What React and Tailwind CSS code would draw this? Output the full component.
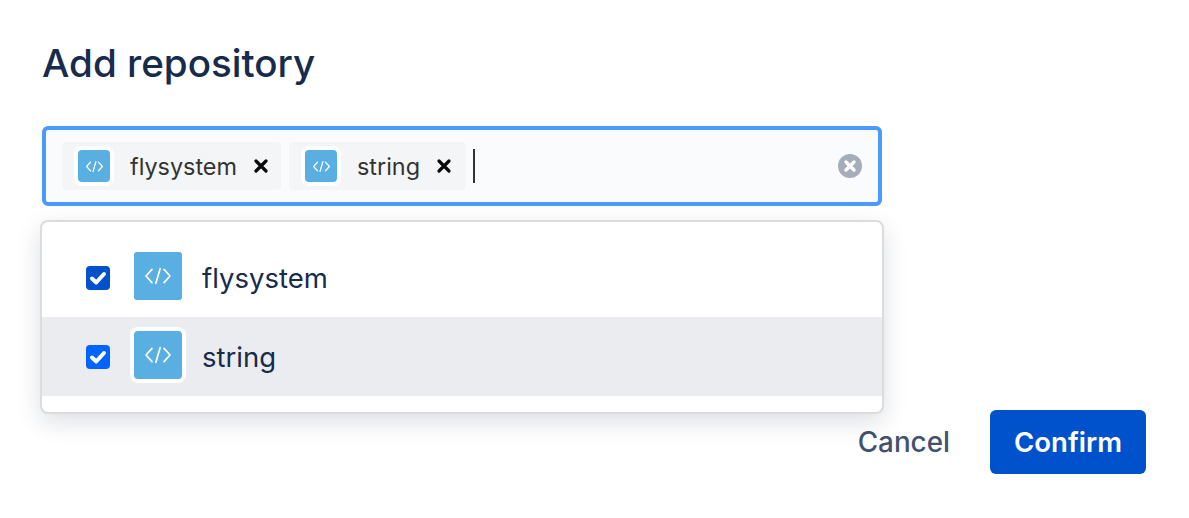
const CodeIcon = ({ size, ring }) => (
  <span className={`flex items-center justify-center bg-[#59afe1] rounded-[3px] ${size === 'lg' ? 'w-12 h-12' : 'w-8 h-8'} ${ring}`}>
    <svg viewBox="0 0 24 24" className={size === 'lg' ? 'w-8 h-8' : 'w-[21px] h-[21px]'} fill="none" stroke="white" strokeWidth={size === 'lg' ? 1.25 : 1.5} strokeLinecap="round" strokeLinejoin="round">
      <path d="M7.5 7 3 12l4.5 5" />
      <path d="M16.5 7 21 12l-4.5 5" />
      <path d="M13.6 6.5 10.4 17.5" />
    </svg>
  </span>
);

const Chip = ({ label, className }) => (
  <div className={`flex items-center h-12 bg-[#f4f5f7] rounded-[4px] pl-4 ${className}`}>
    <CodeIcon size="sm" ring="ring-[4px] ring-white rounded-[4px]" />
    <span className="ml-[20px] pt-0.5 text-[23.4px] text-[#333] leading-none">{label}</span>
    <svg viewBox="0 0 16 16" className="ml-4 w-4 h-4" fill="none" stroke="#0a0a0a" strokeWidth="3.2" strokeLinecap="round">
      <path d="M3 3l10 10M13 3 3 13" />
    </svg>
  </div>
);

const Check = ({ color }) => (
  <span className={`flex items-center justify-center w-6 h-6 rounded-[4px] ${color}`}>
    <svg viewBox="0 0 24 24" className="w-6 h-6" fill="none" stroke="white" strokeWidth="4" strokeLinecap="round" strokeLinejoin="round">
      <path d="M6 12.5 10.2 16.5 18 8" />
    </svg>
  </span>
);

export default function App() {
  return (
    <div className="w-[1189px] h-[518px] bg-white pl-[42px] pr-[43px] pt-[37px] font-['Inter',sans-serif] overflow-hidden">
      <h1 className="text-[38.6px] leading-[52px] font-medium text-[#172b4d]">Add repository</h1>

      <div className="relative mt-[37px] w-[840px]">
        <div className="flex items-center h-20 border-4 border-[#4c9aff] rounded-[6px] bg-[#fafbfc] pl-4 pr-4">
          <Chip label="flysystem" className="w-[219px]" />
          <Chip label="string" className="w-[177px] ml-2" />
          <span className="ml-[7px] w-0.5 h-[34px] bg-[#333]" />
          <span className="ml-auto flex items-center justify-center w-6 h-6 rounded-full bg-[#a5adba]">
            <svg viewBox="0 0 24 24" className="w-6 h-6" fill="none" stroke="white" strokeWidth="3.4" strokeLinecap="round">
              <path d="M8 8l8 8M16 8l-8 8" />
            </svg>
          </span>
        </div>

        <div className="absolute left-[-2px] top-[94px] w-[844px] h-[194px] bg-white border-2 border-[#dcdcdc] rounded-[8px] shadow-[0_8px_24px_rgba(9,30,66,0.14)] pt-[16px] overflow-hidden">
          <div className="flex items-center h-[79px] pl-[44px]">
            <Check color="bg-[#0052cc]" />
            <span className="ml-6 -mt-1"><CodeIcon size="lg" /></span>
            <span className="ml-5 pt-0.5 text-[27.5px] text-[#172b4d]">flysystem</span>
          </div>
          <div className="flex items-center h-[79px] pl-[44px] bg-[#ebecf0]">
            <Check color="bg-[#0065ff]" />
            <span className="ml-6 -mt-1"><CodeIcon size="lg" ring="ring-[4px] ring-white rounded-[4px]" /></span>
            <span className="ml-5 pt-0.5 text-[27.5px] text-[#172b4d]">string</span>
          </div>
        </div>
      </div>

      <div className="flex items-center justify-end mt-[204px]">
        <button className="pt-0.5 text-[27.8px] font-medium text-[#42526e]">Cancel</button>
        <button className="ml-10 pt-0.5 w-[156px] h-16 rounded-[6px] bg-[#0052cc] text-[27.5px] font-semibold text-white">Confirm</button>
      </div>
    </div>
  );
}
